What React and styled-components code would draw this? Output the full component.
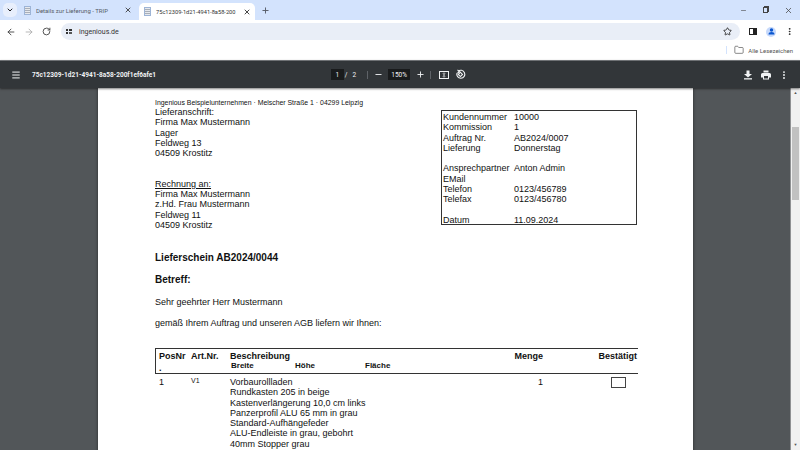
import { Fragment } from "react";
import styled, { createGlobalStyle } from "styled-components";
import { ArrowLeft, ArrowRight, RotateCw, Star, X, Plus, Minus, ChevronDown, Folder, EllipsisVertical, Menu } from "lucide-react";

const GlobalStyle = createGlobalStyle`
  html, body { margin: 0; padding: 0; overflow: hidden; }
  body { font-family: "Liberation Sans", Arial, sans-serif; background: #fff; }
  * { box-sizing: border-box; }
`;

const Screen = styled.div`
  width: 800px;
  height: 450px;
  display: flex;
  flex-direction: column;
  overflow: hidden;
`;

const TabStrip = styled.div`
  height: 20px;
  background: #d3e3fd;
  display: flex;
  align-items: flex-end;
  padding-left: 3px;
`;

const TabSearch = styled.div`
  width: 14px;
  height: 14px;
  margin: 0 2px 3px 0;
  border-radius: 5px;
  background: #e8effc;
  display: flex;
  align-items: center;
  justify-content: center;
  color: #1f1f1f;
`;

const Tab = styled.div`
  width: ${({ $active }) => ($active ? "116px" : "120px")};
  height: ${({ $active }) => ($active ? "17px" : "20px")};
  padding: ${({ $active }) => ($active ? "0 4px 0 5px" : "0 7px 0 5px")};
  display: flex;
  align-items: center;
  gap: 5px;
  background: ${({ $active }) => ($active ? "#fff" : "transparent")};
  border-radius: 5px 5px 0 0;
  color: ${({ $active }) => ($active ? "#333" : "#555b66")};
  font-size: ${({ $active }) => ($active ? "5.7px" : "6px")};
  font-family: Roboto, sans-serif;
  white-space: nowrap;
`;

const TabTitle = styled.span`
  flex: 1;
  overflow: hidden;
`;

const PageGlyph = styled.span`
  width: 7px;
  height: 9px;
  flex: none;
  border: 1px solid #9db4d6;
  background: repeating-linear-gradient(#e6e9ee 0 1px, #a9afb8 1px 2px);
`;

const NewTab = styled.div`
  margin: 0 0 3px 3px;
  width: 14px;
  height: 14px;
  color: #555b66;
  display: flex;
  align-items: center;
  justify-content: center;
`;

const WindowControls = styled.div`
  margin-left: auto;
  align-self: stretch;
  display: flex;
  align-items: center;
  gap: 16px;
  padding-right: 7px;
  color: #444;
`;

const RestoreIcon = styled.span`
  width: 5px;
  height: 6px;
  border: 1px solid #444;
  box-shadow: 1px -1px 0 0 #444;
`;

const AddressRow = styled.div`
  height: 20px;
  background: #fff;
  display: flex;
  align-items: center;
  padding: 3px 0 0 6px;
  color: #444;
`;

const NavButtons = styled.div`
  display: flex;
  align-items: center;
  gap: 8px;
  margin-right: 10px;
`;

const Omnibox = styled.div`
  width: 679px;
  flex: none;
  height: 17px;
  border-radius: 9px;
  background: #e9eef7;
  display: flex;
  align-items: center;
  padding: 0 8px 0 5px;
  gap: 7px;
  font-size: 7px;
  font-family: Roboto, sans-serif;
  color: #333;
`;

const SiteIcon = styled.span`
  width: 6px;
  height: 5px;
  background:
    linear-gradient(90deg, #333 0 2.5px, transparent 2.5px 3.5px, #333 3.5px) 0 0 / 100% 2px no-repeat,
    linear-gradient(90deg, #333 0 2.5px, transparent 2.5px 3.5px, #555 3.5px) 0 3px / 100% 2px no-repeat;
`;

const Url = styled.span`
  flex: 1;
`;

const ToolbarIcons = styled.div`
  display: flex;
  align-items: center;
  gap: 9px;
  padding: 0 0 0 9px;
`;

const PanelIcon = styled.span`
  width: 8px;
  height: 7px;
  border: 1px solid #222;
  background: linear-gradient(90deg, #fff 50%, #222 50%);
`;

const Avatar = styled.span`
  width: 10px;
  height: 10px;
  border-radius: 50%;
  background: #c6d9fb;
  display: flex;
  align-items: center;
  justify-content: center;
`;

const BookmarkRow = styled.div`
  height: 20px;
  background: #fff;
  display: flex;
  align-items: center;
  justify-content: flex-end;
  padding: 0 7px 0 0;
  font-size: 6px;
  font-family: Roboto, sans-serif;
  color: #555;
  gap: 4px;
`;

const Divider = styled.span`
  width: 1px;
  height: 8px;
  margin-right: 3px;
  background: #d3e3fd;
`;

const PdfBar = styled.div`
  height: 28px;
  background: #323639;
  border-top: 1px solid #6f7275;
  box-shadow: 0 1px 2px rgba(0, 0, 0, 0.5);
  display: grid;
  grid-template-columns: 1fr auto 1fr;
  align-items: center;
  color: #f1f3f4;
  padding: 0 11px;
  position: relative;
  z-index: 1;
`;

const BarLeft = styled.div`
  display: flex;
  align-items: center;
  gap: 11px;
`;

const FileName = styled.span`
  font-size: 6.5px;
  font-weight: 700;
  font-family: Roboto, sans-serif;
`;

const BarCenter = styled.div`
  display: flex;
  align-items: center;
  font-size: 6.5px;
  font-family: Roboto, sans-serif;
  margin-left: -3px;
`;

const BarItem = styled.span`
  display: flex;
  align-items: center;
  justify-content: center;
  margin-left: ${({ $ml }) => $ml || 0};
`;

const NumberField = styled(BarItem)`
  background: #191b1c;
  height: 11px;
  width: ${({ $w }) => $w};
`;

const BarSep = styled(BarItem)`
  width: 1px;
  height: 8px;
  background: #5f6368;
`;

const BarRight = styled.div`
  display: flex;
  align-items: center;
  justify-content: flex-end;
  gap: 8px;
`;

const Viewer = styled.div`
  flex: 1;
  min-height: 0;
  display: flex;
  background: #525659;
`;

const PageArea = styled.div`
  flex: 1;
  padding-left: 98px;
  overflow: hidden;
`;

const Sheet = styled.div`
  width: 595px;
  height: 500px;
  background: #fff;
  box-shadow: 0 0 3px rgba(0, 0, 0, 0.5);
  padding: 10px 55px 0 57px;
  color: #111;
  font-size: 9px;
  line-height: 10.25px;
`;

const SenderLine = styled.div`
  font-size: 6.9px;
  line-height: 9px;
`;

const TopRow = styled.div`
  display: flex;
  justify-content: space-between;
  align-items: flex-start;
`;

const Address = styled.div`
  width: 200px;
`;

const AddressLine = styled.div`
  text-decoration: ${({ $underline }) => ($underline ? "underline" : "none")};
  margin-top: ${({ $gap }) => $gap || 0};
`;

const InfoBox = styled.div`
  width: 196px;
  height: 115px;
  margin-top: 3px;
  margin-right: 1px;
  border: 1px solid #333;
  padding: 1px 0 0 1px;
  display: grid;
  grid-template-columns: 71px 1fr;
  grid-auto-rows: 10.25px;
`;

const Heading = styled.div`
  font-weight: 700;
  font-size: 10px;
  line-height: 12px;
  margin-top: ${({ $top }) => $top};
`;

const Para = styled.div`
  margin-top: ${({ $top }) => $top};
`;

const ItemTable = styled.div`
  margin-top: 19.5px;
  width: 483px;
`;

const HeadRow = styled.div`
  height: 26px;
  border: 1px solid #333;
  border-width: 1px 0 1px 1px;
  display: grid;
  grid-template-columns: 32px 39px 223px 90px 94px;
  padding: 2px 0 0 3px;
  font-weight: 700;
  font-size: 9px;
  line-height: 10px;
`;

const HeadCell = styled.div`
  text-align: ${({ $right }) => ($right ? "right" : "left")};
`;

const WrappedDot = styled.div`
  margin-top: 2px;
`;

const SubHead = styled.div`
  display: grid;
  grid-template-columns: 64px 70px 1fr;
  font-size: 8px;
  line-height: 9px;
  padding-left: 1px;
`;

const ItemRow = styled.div`
  display: grid;
  grid-template-columns: 32px 39px 223px 90px 94px;
  padding: 3px 0 0 4px;
`;

const SmallCell = styled.div`
  font-size: 7px;
  line-height: 7px;
`;

const Check = styled.div`
  width: 15px;
  height: 11px;
  border: 1px solid #444;
  margin-left: 68px;
`;

const ScrollTrack = styled.div`
  width: 10px;
  background: #f1f1f1;
  border-left: 1px solid #8f9193;
  display: flex;
  flex-direction: column;
  align-items: center;
  padding: 3px 0;
  color: #555;
  font-size: 4px;
  line-height: 4px;
`;

const ScrollThumb = styled.div`
  flex: none;
  width: 7px;
  height: 73px;
  margin: 32px 0 auto;
  background: #c1c1c1;
`;

const info = [
  ["Kundennummer", "10000"],
  ["Kommission", "1"],
  ["Auftrag Nr.", "AB2024/0007"],
  ["Lieferung", "Donnerstag"],
  ["", ""],
  ["Ansprechpartner", "Anton Admin"],
  ["EMail", ""],
  ["Telefon", "0123/456789"],
  ["Telefax", "0123/456780"],
  ["", ""],
  ["Datum", "11.09.2024"],
];

const description = [
  "Vorbaurollladen",
  "Rundkasten 205 in beige",
  "Kastenverlängerung 10,0 cm links",
  "Panzerprofil ALU 65 mm in grau",
  "Standard-Aufhängefeder",
  "ALU-Endleiste in grau, gebohrt",
  "40mm Stopper grau",
];

export default function App() {
  return (
    <Screen>
      <GlobalStyle />
      <TabStrip>
        <TabSearch><ChevronDown size={8} strokeWidth={3} /></TabSearch>
        <Tab>
          <PageGlyph />
          <TabTitle>Details zur Lieferung - TRIP</TabTitle>
          <X size={8} strokeWidth={2.5} color="#333" />
        </Tab>
        <Tab $active>
          <PageGlyph />
          <TabTitle>75c12309-1d21-4941-8a58-200</TabTitle>
          <X size={8} strokeWidth={2.5} color="#222" />
        </Tab>
        <NewTab><Plus size={9} strokeWidth={2.5} /></NewTab>
        <WindowControls>
          <Minus size={7} />
          <RestoreIcon />
          <X size={9} />
        </WindowControls>
      </TabStrip>

      <AddressRow>
        <NavButtons>
          <ArrowLeft size={10} strokeWidth={2.2} />
          <ArrowRight size={10} strokeWidth={2} color="#aaa" />
          <RotateCw size={9} strokeWidth={2.4} />
        </NavButtons>
        <Omnibox>
          <SiteIcon />
          <Url>ingenious.de</Url>
          <Star size={9} strokeWidth={2.2} color="#222" />
        </Omnibox>
        <ToolbarIcons>
          <PanelIcon />
          <Avatar>
            <svg width="7" height="7" viewBox="0 0 7 7" fill="#0b57d0">
              <circle cx="3.5" cy="2" r="1.7" />
              <path d="M0.5 6.5c0-1.7 1.4-2.4 3-2.4s3 .7 3 2.4z" />
            </svg>
          </Avatar>
          <EllipsisVertical size={9} strokeWidth={2.5} color="#222" />
        </ToolbarIcons>
      </AddressRow>

      <BookmarkRow>
        <Divider />
        <Folder size={10} strokeWidth={1.5} color="#444" />
        Alle Lesezeichen
      </BookmarkRow>

      <PdfBar>
        <BarLeft>
          <Menu size={10} strokeWidth={2.4} />
          <FileName>75c12309-1d21-4941-8a58-200f1ef6afe1</FileName>
        </BarLeft>
        <BarCenter>
          <NumberField $w="13px">1</NumberField>
          <BarItem $ml="1px">/</BarItem>
          <BarItem $ml="5px">2</BarItem>
          <BarSep $ml="11px" />
          <BarItem $ml="6px"><Minus size={9} strokeWidth={2.4} /></BarItem>
          <NumberField $w="22px" $ml="5px">150%</NumberField>
          <BarItem $ml="6px"><Plus size={9} strokeWidth={2.4} /></BarItem>
          <BarSep $ml="5px" />
          <BarItem $ml="8px">
            <svg width="10" height="10" viewBox="0 0 10 10" fill="none" stroke="#f1f3f4">
              <rect x="0.5" y="1.5" width="9" height="7" />
              <path d="M5 2.5v2M4 3.5l1 1 1-1M5 7.5v-2M4 6.5l1-1 1 1" strokeWidth="0.8" />
            </svg>
          </BarItem>
          <BarItem $ml="6px">
            <svg width="11" height="11" viewBox="0 0 11 11" fill="none" stroke="#f1f3f4" strokeWidth="1.1">
              <path d="M3 2.4a4 4 0 1 1-1 1.6" />
              <path d="M2.5 0.8L4.5 2.6 2.4 4.2" />
              <rect x="3.9" y="3.9" width="3" height="3" transform="rotate(45 5.4 5.4)" />
            </svg>
          </BarItem>
        </BarCenter>
        <BarRight>
          <svg width="10" height="10" viewBox="0 0 10 10" fill="#f1f3f4">
            <path d="M3.5 0.5h3v3.5H9L5 7.6 1 4h2.5z" />
            <rect x="1" y="8.2" width="8" height="1.3" />
          </svg>
          <svg width="10" height="10" viewBox="0 0 10 10" fill="#f1f3f4">
            <rect x="2.5" y="0.5" width="5" height="2" />
            <path d="M1.5 3h7A1.5 1.5 0 0 1 10 4.5V7.5H8V9.5H2V7.5H0V4.5A1.5 1.5 0 0 1 1.5 3z" />
            <rect x="3" y="6" width="4" height="2.5" fill="#323639" />
          </svg>
          <EllipsisVertical size={10} strokeWidth={2.6} />
        </BarRight>
      </PdfBar>

      <Viewer>
        <PageArea>
          <Sheet>
            <SenderLine>Ingenious Beispielunternehmen · Melscher Straße 1 · 04299 Leipzig</SenderLine>
            <TopRow>
              <Address>
                <AddressLine>Lieferanschrift:</AddressLine>
                <AddressLine>Firma Max Mustermann</AddressLine>
                <AddressLine>Lager</AddressLine>
                <AddressLine>Feldweg 13</AddressLine>
                <AddressLine>04509 Krostitz</AddressLine>
                <AddressLine $underline $gap="20.5px">Rechnung an:</AddressLine>
                <AddressLine>Firma Max Mustermann</AddressLine>
                <AddressLine>z.Hd. Frau Mustermann</AddressLine>
                <AddressLine>Feldweg 11</AddressLine>
                <AddressLine>04509 Krostitz</AddressLine>
              </Address>
              <InfoBox>
                {info.map(([label, value], i) => (
                  <Fragment key={i}>
                    <span>{label}</span>
                    <span>{value}</span>
                  </Fragment>
                ))}
              </InfoBox>
            </TopRow>
            <Heading $top="22px">Lieferschein AB2024/0044</Heading>
            <Heading $top="10px">Betreff:</Heading>
            <Para $top="11px">Sehr geehrter Herr Mustermann</Para>
            <Para $top="11px">gemäß Ihrem Auftrag und unseren AGB liefern wir Ihnen:</Para>
            <ItemTable>
              <HeadRow>
                <HeadCell>PosNr<WrappedDot>.</WrappedDot></HeadCell>
                <HeadCell>Art.Nr.</HeadCell>
                <div>
                  <HeadCell>Beschreibung</HeadCell>
                  <SubHead>
                    <span>Breite</span>
                    <span>Höhe</span>
                    <span>Fläche</span>
                  </SubHead>
                </div>
                <HeadCell $right>Menge</HeadCell>
                <HeadCell $right>Bestätigt</HeadCell>
              </HeadRow>
              <ItemRow>
                <div>1</div>
                <SmallCell>V1</SmallCell>
                <div>
                  {description.map((line) => (
                    <div key={line}>{line}</div>
                  ))}
                </div>
                <HeadCell $right>1</HeadCell>
                <Check />
              </ItemRow>
            </ItemTable>
          </Sheet>
        </PageArea>
        <ScrollTrack>
          <span>▲</span>
          <ScrollThumb />
          <span>▼</span>
        </ScrollTrack>
      </Viewer>
    </Screen>
  );
}
